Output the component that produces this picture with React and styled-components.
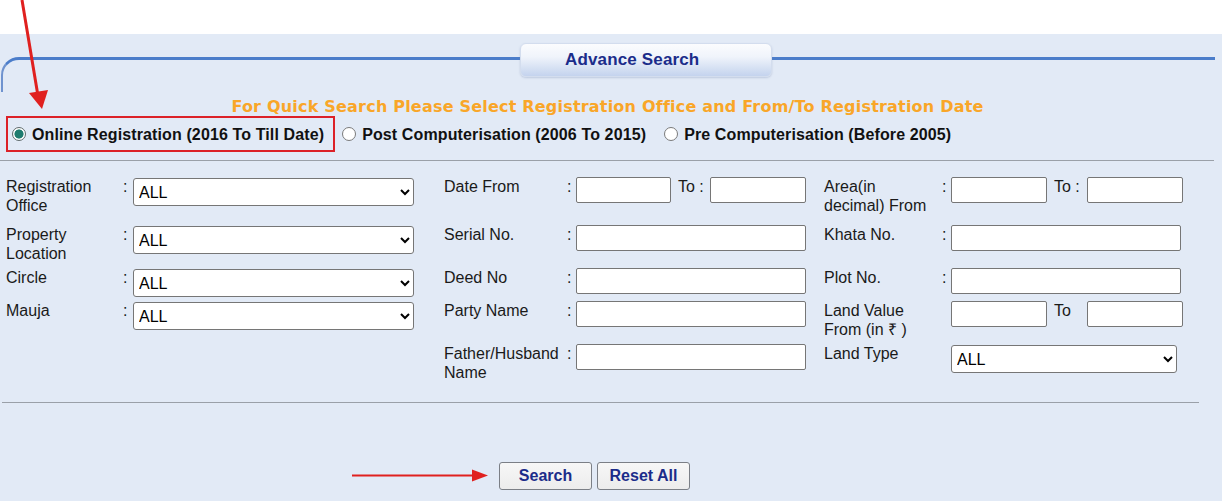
import React from "react";
import styled, { createGlobalStyle } from "styled-components";

const Global = createGlobalStyle`
  html, body { margin: 0; padding: 0; background: #fff; }
  body { font-family: "Liberation Sans", Arial, sans-serif; }
  * { box-sizing: border-box; }
`;

const Page = styled.div`
  position: relative;
  width: 1222px;
  height: 501px;
  padding-top: 34px;
  background: #fff;
  overflow: hidden;
`;

const Panel = styled.div`
  height: 467px;
  background: #e2eaf6;
`;

const Header = styled.div`
  position: relative;
  height: 58px;
  padding-top: 23px;
  padding-right: 7px;
`;

const CornerLine = styled.div`
  height: 35px;
  margin-left: 1px;
  border-top: 3px solid #4b7dca;
  border-left: 2px solid #6f93cf;
  border-top-left-radius: 18px;
`;

const Tab = styled.div`
  position: absolute;
  left: 520px;
  top: 9px;
  width: 252px;
  height: 34px;
  padding-left: 44px;
  display: flex;
  align-items: center;
  border: 1px solid #d3ddee;
  border-radius: 6px;
  background: linear-gradient(180deg, #fbfcfe 0%, #f0f4fb 40%, #d6e1f3 75%, #c4d3ee 100%);
  box-shadow: 0 1px 2px rgba(120, 140, 180, 0.35);
  color: #1b2c8a;
  font-weight: bold;
  font-size: 17px;
  letter-spacing: 0.15px;
`;

const Heading = styled.div`
  width: 1215px;
  margin-top: 4px;
  height: 20px;
  line-height: 21px;
  text-align: center;
  font-family: "DejaVu Sans", Verdana, sans-serif;
  font-weight: bold;
  font-size: 16px;
  letter-spacing: 0.2px;
  color: #f9a628;
`;

const RadioRow = styled.div`
  display: flex;
  align-items: center;
  padding-left: 6px;
  height: 36px;
`;

const Highlight = styled.div`
  display: flex;
  align-items: center;
  height: 36px;
  padding: 1px 9px 0 4px;
  border: 2px solid #dc2128;
`;

const Option = styled.label`
  display: flex;
  align-items: center;
  gap: 6px;
  margin-left: ${(p) => p.$offset || 0}px;
  padding-top: 1px;
  font-weight: bold;
  font-size: 16px;
  letter-spacing: 0.12px;
  color: #111;
  white-space: nowrap;
`;

const Radio = styled.input.attrs({ type: "radio" })`
  appearance: none;
  width: 14px;
  height: 14px;
  margin: 0 0 2px 0;
  border: 1px solid #7a7a7a;
  border-radius: 50%;
  background: #fff;
  &:checked {
    border-color: #5f6b6b;
    background: radial-gradient(circle, #207c6f 0 4.2px, #fff 4.9px);
  }
`;

const Rule = styled.hr`
  margin: ${(p) => p.$top}px ${(p) => p.$right}px 0 ${(p) => p.$left}px;
  border: 0;
  border-top: 1px solid #9aa0a8;
  height: 0;
`;

const FormGrid = styled.div`
  display: grid;
  margin-top: 16px;
  padding-left: 6px;
  grid-template-columns: 117px 10px 311px 123px 9px 248px 118px 9px 271px;
  grid-template-rows: 48px 43px 33px 43px auto;
  align-items: start;
  font-size: 16px;
  line-height: 19px;
  color: #1a1a1a;
`;

const Label = styled.div`
  max-width: ${(p) => p.$max || 200}px;
`;

const Colon = styled.div``;

const Field = styled.div`
  display: flex;
  align-items: flex-start;
`;

const Select = styled.select`
  width: ${(p) => p.$w}px;
  height: 28px;
  margin-top: 1px;
  padding: 0 1px;
  font-family: "Liberation Sans", Arial, sans-serif;
  font-size: 16px;
  color: #000;
  background: #fff;
  border: 1px solid #767676;
  border-radius: 3px;
`;

const Input = styled.input.attrs({ type: "text" })`
  width: ${(p) => p.$w}px;
  height: 26px;
  margin: 0;
  padding: 1px 3px;
  font-family: "Liberation Sans", Arial, sans-serif;
  font-size: 16px;
  background: #fff;
  border: 1px solid #767676;
  border-radius: 2px;
`;

const RangeTo = styled.span`
  width: ${(p) => p.$w}px;
  padding-left: 7px;
  white-space: nowrap;
`;

const Buttons = styled.div`
  display: flex;
  gap: 5px;
  margin-top: 59px;
  padding-left: 499px;
`;

const Button = styled.button`
  width: 93px;
  height: 28px;
  padding: 0;
  font-family: "Liberation Sans", Arial, sans-serif;
  font-weight: bold;
  font-size: 16px;
  color: #1b2c8a;
  background: linear-gradient(180deg, #f7f7f7, #ececec);
  border: 1px solid #7b7f86;
  border-radius: 3px;
`;

const Annotations = styled.svg`
  position: absolute;
  left: 0;
  top: 0;
  pointer-events: none;
`;

const Range = ({ colon = true, first = 96, gap = 40 }) => (
  <Field>
    <Input $w={first} />
    <RangeTo $w={gap}>{colon ? "To :" : "To"}</RangeTo>
    <Input $w={96} />
  </Field>
);

const AllSelect = ({ w }) => (
  <Select $w={w} defaultValue="ALL">
    <option>ALL</option>
  </Select>
);

export default function App() {
  return (
    <>
      <Global />
      <Page>
        <Panel>
          <Header>
            <CornerLine />
            <Tab>Advance Search</Tab>
          </Header>
          <Heading>
            For Quick Search Please Select Registration Office and From/To Registration Date
          </Heading>
          <RadioRow>
            <Highlight>
              <Option>
                <Radio name="mode" defaultChecked />
                Online Registration (2016 To Till Date)
              </Option>
            </Highlight>
            <Option $offset={7}>
              <Radio name="mode" />
              Post Computerisation (2006 To 2015)
            </Option>
            <Option $offset={18}>
              <Radio name="mode" />
              Pre Computerisation (Before 2005)
            </Option>
          </RadioRow>
          <Rule $top={8} $right={8} $left={0} />
          <FormGrid>
            <Label>Registration Office</Label>
            <Colon>:</Colon>
            <Field><AllSelect w={281} /></Field>
            <Label>Date From</Label>
            <Colon>:</Colon>
            <Range first={95} gap={39} />
            <Label $max={110}>Area(in decimal) From</Label>
            <Colon>:</Colon>
            <Range />

            <Label>Property Location</Label>
            <Colon>:</Colon>
            <Field><AllSelect w={281} /></Field>
            <Label>Serial No.</Label>
            <Colon>:</Colon>
            <Field><Input $w={230} /></Field>
            <Label $max={110}>Khata No.</Label>
            <Colon>:</Colon>
            <Field><Input $w={230} /></Field>

            <Label>Circle</Label>
            <Colon>:</Colon>
            <Field><AllSelect w={281} /></Field>
            <Label>Deed No</Label>
            <Colon>:</Colon>
            <Field><Input $w={230} /></Field>
            <Label $max={110}>Plot No.</Label>
            <Colon>:</Colon>
            <Field><Input $w={230} /></Field>

            <Label>Mauja</Label>
            <Colon>:</Colon>
            <Field><AllSelect w={281} /></Field>
            <Label>Party Name</Label>
            <Colon>:</Colon>
            <Field><Input $w={230} /></Field>
            <Label $max={110}>Land Value From (in ₹ )</Label>
            <Colon />
            <Range colon={false} />

            <Label />
            <Colon />
            <Field />
            <Label>Father/Husband Name</Label>
            <Colon>:</Colon>
            <Field><Input $w={230} /></Field>
            <Label $max={110}>Land Type</Label>
            <Colon />
            <Field><AllSelect w={226} /></Field>
          </FormGrid>
          <Rule $top={20} $right={23} $left={2} />
          <Buttons>
            <Button>Search</Button>
            <Button>Reset All</Button>
          </Buttons>
        </Panel>
        <Annotations width="1222" height="501" viewBox="0 0 1222 501">
          <line x1="22" y1="0" x2="38" y2="96" stroke="#e0201f" strokeWidth="3" />
          <polygon points="29,93 48,90 42,109" fill="#e0201f" />
          <line x1="352" y1="475.5" x2="475" y2="475.5" stroke="#e0201f" strokeWidth="2.2" />
          <polygon points="472,469.5 488,475.5 472,481.5" fill="#e0201f" />
        </Annotations>
      </Page>
    </>
  );
}
